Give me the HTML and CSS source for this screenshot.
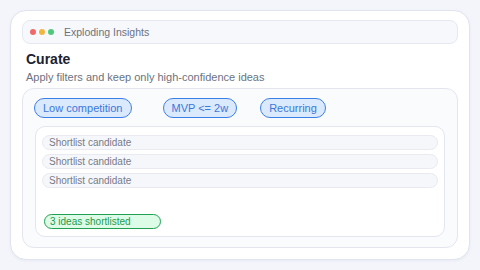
FILE: index.html
```html
<!DOCTYPE html>
<html lang="en">

<head>
    <meta charset="UTF-8">
    <meta name="viewport" content="width=device-width, initial-scale=1.0">
    <title>Exploding Insights</title>
    <link rel="stylesheet" href="styles.css">
</head>

<body>
    <div class="card">
        <div class="titlebar">
            <div class="dots">
                <span class="dot red"></span>
                <span class="dot yellow"></span>
                <span class="dot green"></span>
            </div>
            <span class="app-name">Exploding Insights</span>
        </div>

        <h1>Curate</h1>
        <p class="subtitle">Apply filters and keep only high-confidence ideas</p>

        <div class="panel">
            <div class="filters">
                <span class="chip first">Low competition</span>
                <span class="chip">MVP &lt;= 2w</span>
                <span class="chip">Recurring</span>
            </div>
            <div class="list">
                <div class="row">Shortlist candidate</div>
                <div class="row">Shortlist candidate</div>
                <div class="row">Shortlist candidate</div>
                <span class="badge">3 ideas shortlisted</span>
            </div>
        </div>
    </div>
</body>

</html>
```

FILE: styles.css
```css
body {
    margin: 0;
    padding: 0;
    background-color: #f3f5fb;
    font-family: "Liberation Sans", Arial, sans-serif;
}

.card {
    box-sizing: border-box;
    width: 460px;
    height: 250px;
    margin: 10px;
    padding: 9px 11px 11px;
    background-color: #ffffff;
    border: 1px solid #e1e4ee;
    border-radius: 16px;
    box-shadow: 0 1px 3px rgba(30, 40, 80, 0.05);
    display: flex;
    flex-direction: column;
}

.titlebar {
    box-sizing: border-box;
    height: 24px;
    padding: 0 8px 0 7px;
    background-color: #f7f8fc;
    border: 1px solid #e6e9f1;
    border-radius: 8px;
    display: flex;
    align-items: center;
    gap: 10px;
}

.dots {
    display: flex;
    gap: 3px;
}

.dot {
    width: 6px;
    height: 6px;
    border-radius: 50%;
}

.red {
    background-color: #ee6a6a;
}

.yellow {
    background-color: #f3b63c;
}

.green {
    background-color: #4ec97c;
}

.app-name {
    font-size: 10.5px;
    color: #6b7280;
}

h1 {
    margin: 7px 0 2px 4px;
    font-size: 14px;
    line-height: 17px;
    font-weight: bold;
    color: #1d2230;
}

.subtitle {
    margin: 0 0 4px 4px;
    font-size: 11px;
    line-height: 14px;
    color: #6b7280;
}

.panel {
    flex: 1;
    box-sizing: border-box;
    padding: 9px 12px 10px 11px;
    background-color: #fafbfd;
    border: 1px solid #e3e6ee;
    border-radius: 12px;
    display: flex;
    flex-direction: column;
    gap: 8px;
}

.filters {
    display: flex;
    gap: 23px;
}

.chip {
    box-sizing: border-box;
    height: 20px;
    padding: 0 8px;
    font-size: 11px;
    line-height: 18px;
    color: #3a78db;
    background-color: #dbe9fd;
    border: 1px solid #3b7fe6;
    border-radius: 10px;
}

.chip.first {
    margin-right: 8px;
}

.list {
    flex: 1;
    margin-left: 1px;
    padding: 7px 6px 7px 6px;
    background-color: #ffffff;
    border: 1px solid #e3e6ee;
    border-radius: 10px;
    display: flex;
    flex-direction: column;
    align-items: flex-start;
    gap: 4px;
}

.row {
    box-sizing: border-box;
    align-self: stretch;
    height: 15px;
    margin-top: 1px;
    padding: 0 6px;
    font-size: 10px;
    line-height: 13px;
    color: #767c89;
    background-color: #f6f7fa;
    border: 1px solid #e8eaf0;
    border-radius: 8px;
}

.row + .row {
    margin-top: 0;
}

.badge {
    box-sizing: border-box;
    width: 117px;
    height: 15px;
    margin-top: auto;
    margin-left: 2px;
    padding: 0 5px;
    font-size: 10px;
    line-height: 13px;
    color: #1e9a4e;
    background-color: #dcfce7;
    border: 1px solid #22a052;
    border-radius: 8px;
}
```
